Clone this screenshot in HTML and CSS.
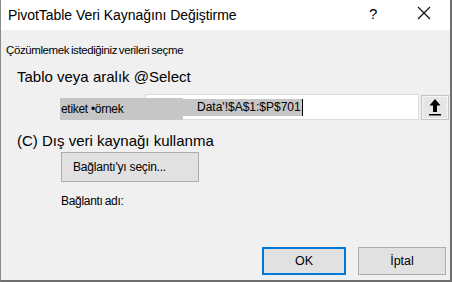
FILE: index.html
```html
<!DOCTYPE html>
<html lang="tr">
<head>
  <meta charset="UTF-8" />
  <title>PivotTable Veri Kaynağını Değiştirme</title>
  <link rel="stylesheet" href="styles.css">
</head>
<body>
  <div class="dialog">
    <header class="titlebar">
      <span class="title">PivotTable Veri Kaynağını Değiştirme</span>
      <span class="help">?</span>
      <span class="close">
        <svg width="14" height="14" viewBox="0 0 14 14"><path d="M1 1 L13 13 M13 1 L1 13" stroke="#111" stroke-width="1.2" fill="none"/></svg>
      </span>
    </header>

    <div class="content">
      <div class="subtitle">Çözümlemek istediğiniz verileri seçme</div>
      <div class="option">Tablo veya aralık @Select</div>

      <div class="range-row">
        <span class="range-label">etiket •örnek</span>
        <div class="range-input">
          <span class="selected">Data'!$A$1:$P$701</span>
        </div>
        <button class="collapse">
          <svg width="14" height="18" viewBox="0 0 14 18"><path d="M7 1 L1.5 7.5 H5 V14 H9 V7.5 H12.5 Z" fill="#000"/><rect x="1" y="16" width="12" height="1.5" fill="#000"/></svg>
        </button>
      </div>

      <div class="option external">(C) Dış veri kaynağı kullanma</div>
      <button class="btn connect">Bağlantı'yı seçin...</button>
      <div class="conn-name">Bağlantı adı:</div>

      <!-- Dialog buttons -->
      <div class="actions">
        <button class="btn ok">OK</button>
        <button class="btn">İptal</button>
      </div>
    </div>
  </div>
</body>
</html>
```

FILE: styles.css
```css
:root {
  --face: #f0f0f0;
  --btn-face: #e1e1e1;
  --btn-border: #adadad;
  --accent: #0078d7;
  --text: #000000;
  --selection: #c6c6c6;
}

html, body {
  margin: 0;
  padding: 0;
}

body {
  font-family: 'Liberation Sans', Arial, sans-serif;
  color: var(--text);
  width: 452px;
  height: 282px;
  overflow: hidden;
}

.dialog {
  width: 452px;
  height: 282px;
  box-sizing: border-box;
  border-left: 1px solid #8a8a8a;
  border-right: 2px solid #6e6e6e;
  border-bottom: 2px solid #6e6e6e;
  background: var(--face);
  display: flex;
  flex-direction: column;
}

.titlebar {
  height: 30px;
  background: #ffffff;
  display: flex;
  align-items: center;
  padding-left: 7px;
  flex-shrink: 0;
}

.title {
  font-size: 14px;
  flex: 1;
  letter-spacing: -0.05px;
}

.help {
  font-size: 15px;
  width: 14px;
  margin-right: 34px;
  margin-top: -3px;
}

.close {
  width: 14px;
  height: 14px;
  margin-right: 19px;
  margin-top: -4px;
  display: flex;
}

.content {
  flex: 1;
  display: flex;
  flex-direction: column;
  padding: 13px 0 0 5px;
  position: relative;
}

.subtitle {
  font-size: 11.5px;
  letter-spacing: -0.4px;
  word-spacing: -1px;
  line-height: 14px;
}

.option {
  font-size: 15px;
  line-height: 18px;
  margin: 11px 0 0 11px;
}

.range-row {
  display: flex;
  align-items: center;
  margin: 8px 0 0 54px;
  height: 26px;
}

.range-label {
  position: relative;
  z-index: 1;
  width: 123px;
  height: 22px;
  line-height: 22px;
  margin-top: 4px;
  margin-right: -38px;
  background: var(--selection);
  font-size: 12px;
  letter-spacing: -0.3px;
  padding-left: 1px;
  box-sizing: border-box;
}

.range-input {
  width: 274px;
  height: 26px;
  box-sizing: border-box;
  background: #ffffff;
  border: 1px solid #dcdcdc;
  display: flex;
  align-items: center;
  padding-left: 37px;
}

.selected {
  background: var(--selection);
  font-size: 12px;
  line-height: 17px;
  padding: 0 1px 0 14px;
  border-right: 1px solid #000;
}

.collapse {
  width: 28px;
  height: 25px;
  margin-left: 2px;
  background: #e6e6e6;
  border: 1px solid #c4c4c4;
  box-shadow: inset 0 0 0 1px #f6f6f6;
  padding: 0;
  display: flex;
  align-items: center;
  justify-content: center;
}

.external {
  margin-top: 12px;
}

.btn {
  font-family: 'Liberation Sans', Arial, sans-serif;
  background: var(--btn-face);
  border: 1px solid var(--btn-border);
  font-size: 12px;
  color: var(--text);
  padding: 0;
}

.connect {
  width: 138px;
  height: 30px;
  margin: 2px 0 0 55px;
  text-align: left;
  padding-left: 11px;
  letter-spacing: -0.2px;
}

.conn-name {
  font-size: 12px;
  letter-spacing: -0.3px;
  word-spacing: -1px;
  margin: 12px 0 0 55px;
}

.actions {
  position: absolute;
  right: 4px;
  bottom: 5px;
  display: flex;
  gap: 12px;
}

.actions .btn {
  width: 88px;
  height: 28px;
  font-size: 12.5px;
}

.actions .ok {
  width: 84px;
  border: 1px solid var(--accent);
  box-shadow: inset 0 0 0 1px var(--accent);
}
```
